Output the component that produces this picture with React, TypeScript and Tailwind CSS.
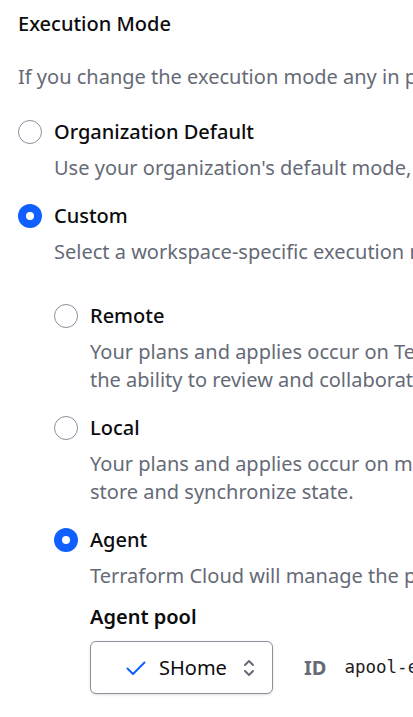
import { useState } from "react";

type Mode = { id: string; label: string; description: string[] };

const nestedModes: Mode[] = [
  {
    id: "remote",
    label: "Remote",
    description: [
      "Your plans and applies occur on Terraform Cloud's infrastructure. You and your team have",
      "the ability to review and collaborate on runs within the app.",
    ],
  },
  {
    id: "local",
    label: "Local",
    description: [
      "Your plans and applies occur on machines you control. Terraform Cloud is only used to",
      "store and synchronize state.",
    ],
  },
  {
    id: "agent",
    label: "Agent",
    description: ["Terraform Cloud will manage the plans and applies your agents execute."],
  },
];

const Radio = ({ checked }: { checked: boolean }) =>
  checked ? (
    <span className="flex h-6 w-6 shrink-0 items-center justify-center rounded-full bg-[#1060ff]">
      <span className="h-2 w-2 rounded-full bg-white" />
    </span>
  ) : (
    <span className="h-6 w-6 shrink-0 rounded-full border border-[#8c909c] bg-white" />
  );

const Option = ({
  mode,
  checked,
  onSelect,
  children,
}: {
  mode: Mode;
  checked: boolean;
  onSelect: () => void;
  children?: React.ReactNode;
}) => (
  <div>
    <label className="mb-2 flex cursor-pointer items-center gap-3" onClick={onSelect}>
      <Radio checked={checked} />
      <span className="text-[20px] leading-7 font-medium text-[#0c0c0e]">{mode.label}</span>
    </label>
    <div className="pl-9">
      <p className="text-[20px] leading-7 text-[#656a76]">
        {mode.description.map((line) => (
          <span key={line} className="block whitespace-nowrap">
            {line}
          </span>
        ))}
      </p>
      {children}
    </div>
  </div>
);

const App = () => {
  const [mode, setMode] = useState("custom");
  const [nested, setNested] = useState("agent");

  return (
    <div className="h-[717px] w-[413px] overflow-hidden bg-white font-['Noto_Sans',sans-serif]">
      <div className="pl-[18px] pt-[10px]">
        <h2 className="text-[20px] leading-7 font-medium text-[#0c0c0e]">Execution Mode</h2>
        <p className="mt-[25px] whitespace-nowrap text-[20px] leading-7 text-[#656a76]">
          If you change the execution mode any in progress runs will be discarded.
        </p>

        <div className="mt-[27px] space-y-5">
          <Option
            mode={{
              id: "default",
              label: "Organization Default",
              description: ["Use your organization's default mode, currently set to Remote."],
            }}
            checked={mode === "default"}
            onSelect={() => setMode("default")}
          />
          <Option
            mode={{
              id: "custom",
              label: "Custom",
              description: ["Select a workspace-specific execution mode."],
            }}
            checked={mode === "custom"}
            onSelect={() => setMode("custom")}
          >
            <div className="mt-[36px] space-y-5">
              {nestedModes.map((m) => (
                <Option
                  key={m.id}
                  mode={m}
                  checked={nested === m.id}
                  onSelect={() => setNested(m.id)}
                >
                  {m.id === "agent" && (
                    <div className="mt-[13px]">
                      <div className="text-[20px] leading-7 font-semibold text-[#0c0c0e]">Agent pool</div>
                      <div className="mt-[10px] flex items-center gap-[31px]">
                        <button className="flex h-[53px] w-[183px] shrink-0 items-center rounded-md border border-[#8c909c] bg-white pr-4 pl-[34px] shadow-sm">
                          <svg width="22" height="22" viewBox="0 0 22 22" fill="none" stroke="#1060ff" strokeWidth="2" strokeLinecap="round" strokeLinejoin="round">
                            <path d="M2.5 11.5l5.5 5.5L19.5 5.5" />
                          </svg>
                          <span className="ml-[12px] text-[20px] text-[#0c0c0e]">SHome</span>
                          <svg className="ml-auto" width="14" height="22" viewBox="0 0 14 22" fill="none" stroke="#656a76" strokeWidth="2" strokeLinecap="round" strokeLinejoin="round">
                            <path d="M3 8l4-4 4 4M3 14l4 4 4-4" />
                          </svg>
                        </button>
                        <div className="flex items-center gap-[18px] whitespace-nowrap">
                          <span className="text-[20px] font-bold text-[#656a76]">ID</span>
                          <code className="font-['DejaVu_Sans_Mono',monospace] text-[17.5px] text-[#1f2024]">apool-eXample12345</code>
                        </div>
                      </div>
                    </div>
                  )}
                </Option>
              ))}
            </div>
          </Option>
        </div>
      </div>
    </div>
  );
};

export default App;
